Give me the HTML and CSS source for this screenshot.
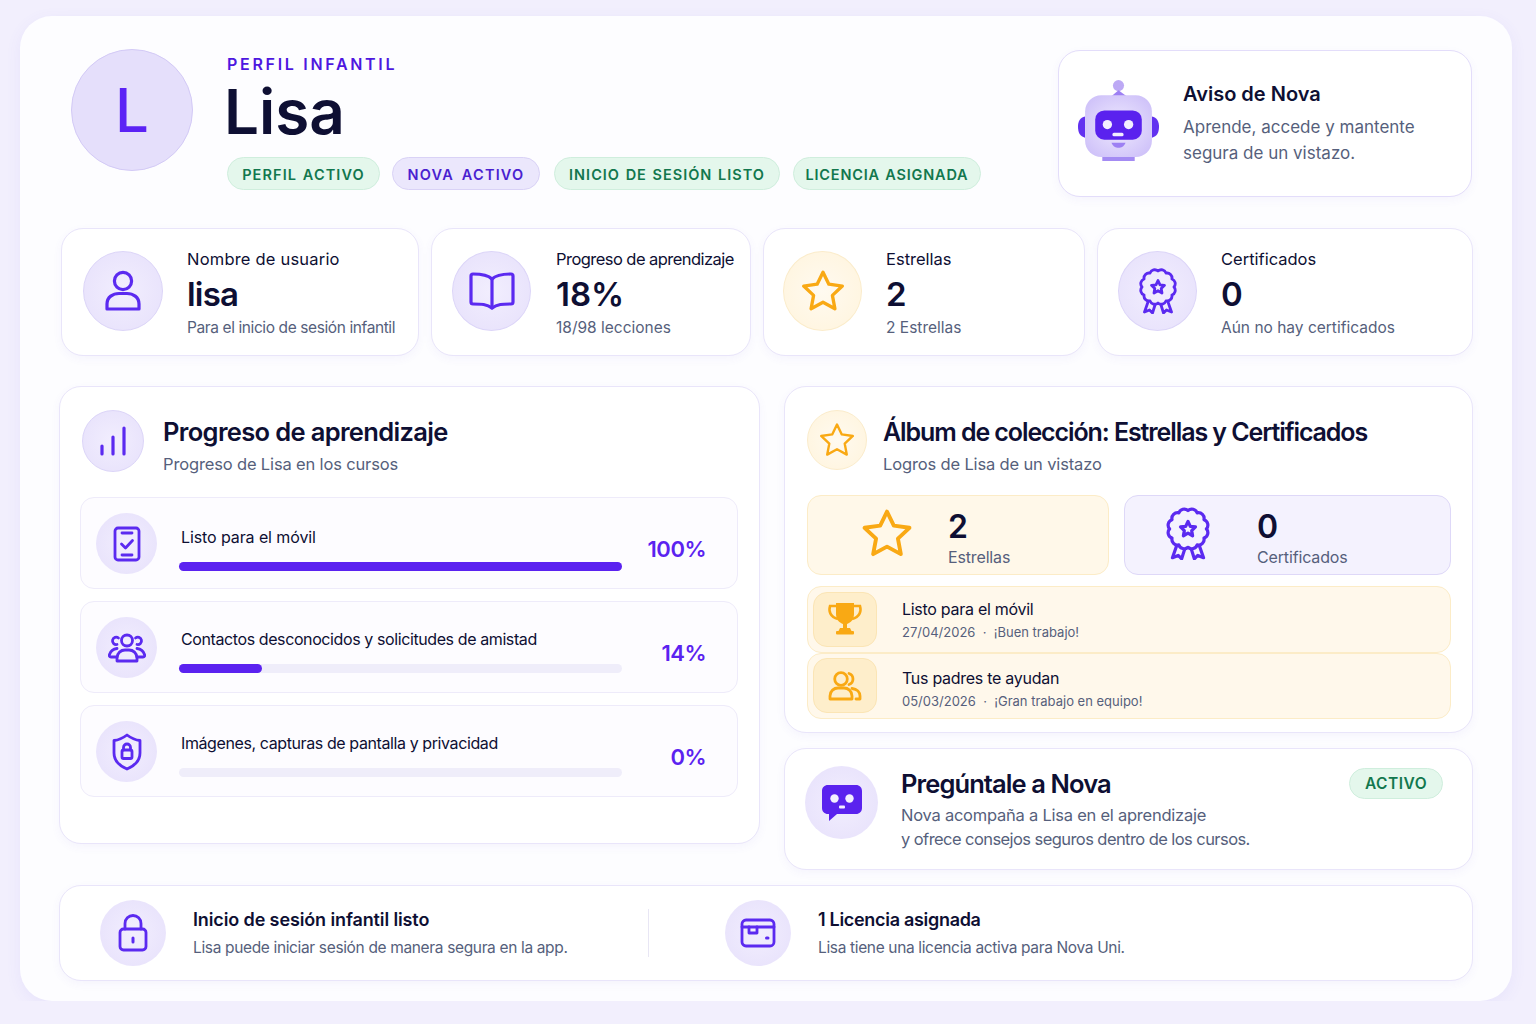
FILE: index.html
```html
<!DOCTYPE html>
<html lang="es">
<head>
    <meta charset="UTF-8">
    <meta name="viewport" content="width=device-width, initial-scale=1.0">
    <title>Perfil infantil - Lisa</title>
    <link rel="stylesheet" href="styles.css">
</head>
<body>
    <div class="shell">
        <header class="top">
            <div class="avatar">L</div>
            <div class="who">
                <div class="eyebrow">PERFIL INFANTIL</div>
                <h1>Lisa</h1>
                <div class="chips">
                    <span class="chip chip-green chip-a">PERFIL ACTIVO</span>
                    <span class="chip chip-violet chip-b">NOVA ACTIVO</span>
                    <span class="chip chip-green chip-c">INICIO DE SESIÓN LISTO</span>
                    <span class="chip chip-green chip-d">LICENCIA ASIGNADA</span>
                </div>
            </div>
            <aside class="notice">
                <svg class="robot" viewBox="0 0 80 80">
                    <defs>
                        <radialGradient id="robot-body" cx="50%" cy="50%" r="60%">
                            <stop offset="0%" stop-color="#efeafe"/>
                            <stop offset="100%" stop-color="#cfc2f9"/>
                        </radialGradient>
                    </defs>
                    <circle cx="40" cy="5.500" r="5.500" fill="#bda9f5"/>
                    <path d="M33 16 L40 10 L48 16 Z" fill="#9d80f3"/>
                    <path d="M7 36 C2 37 0 41 0 46 C0 52 2 56 7 57 Z" fill="#6231f0"/>
                    <path d="M73 36 C78 37 80 41 80 46 C80 52 78 56 73 57 Z" fill="#6231f0"/>
                    <rect x="24" y="74" width="32" height="6" fill="#a48bf3"/>
                    <rect x="7" y="15" width="66" height="61" rx="16" fill="url(#robot-body)"/>
                    <rect x="17" y="30" width="46" height="29" rx="9" fill="#5a22ee"/>
                    <circle cx="29" cy="44" r="4.600" fill="#f3efff"/>
                    <circle cx="50" cy="44" r="4.600" fill="#f3efff"/>
                    <rect x="34" y="52" width="11" height="3.600" rx="1.500" fill="#f3efff"/>
                    <path d="M33 62 H47 C45 66 43 67 40 67 C37 67 35 66 33 62 Z" fill="#9d80f3"/>
                </svg>
                <div>
                    <h3>Aviso de Nova</h3>
                    <p>Aprende, accede y mantente<br>segura de un vistazo.</p>
                </div>
            </aside>
        </header>

        <section class="stats">
            <div class="card stat stat-a">
                <div class="disc disc-80">
                    <svg class="ico" width="42" height="44" viewBox="0 0 42 44"><circle cx="21" cy="12" r="8.600"/><path d="M5 40 V35 C5 28 11 24.500 17 24.500 H25 C31 24.500 37 28 37 35 V40 Z"/></svg>
                </div>
                <div class="stat-text">
                    <div class="stat-label label-wide">Nombre de usuario</div>
                    <div class="stat-value value-tight">lisa</div>
                    <div class="stat-sub sub-tight">Para el inicio de sesión infantil</div>
                </div>
            </div>
            <div class="card stat stat-b">
                <div class="disc disc-80">
                    <svg class="ico" width="46" height="40" viewBox="0 0 46 40"><path d="M23 8 C19 4 13 3 4 3 C2.500 3 2 4 2 5 V31 C2 32.500 3 33 4 33 C12 33 18 33 23 37 C28 33 34 33 42 33 C43 33 44 32.500 44 31 V5 C44 4 43.500 3 42 3 C33 3 27 4 23 8 Z"/><path d="M23 8 V37"/></svg>
                </div>
                <div class="stat-text">
                    <div class="stat-label label-tight">Progreso de aprendizaje</div>
                    <div class="stat-value">18%</div>
                    <div class="stat-sub">18/98 lecciones</div>
                </div>
            </div>
            <div class="card stat stat-c">
                <div class="disc disc-80 disc-amber">
                    <svg class="ico ico-amber" width="46" height="44" viewBox="0 0 44 42"><path d="M22 3 L27.600 14.500 L40.500 16.300 L31 25.200 L33.400 38 L22 31.800 L10.600 38 L13 25.200 L3.500 16.300 L16.400 14.500 Z"/></svg>
                </div>
                <div class="stat-text">
                    <div class="stat-label">Estrellas</div>
                    <div class="stat-value">2</div>
                    <div class="stat-sub">2 Estrellas</div>
                </div>
            </div>
            <div class="card stat stat-d">
                <div class="disc disc-80">
                    <svg class="ico ico-medal" width="38" height="46" viewBox="0 0 38 46"><path d="M19 3 A5 5 0 0 1 27 5.100 A5 5 0 0 1 32.900 11 A5 5 0 0 1 35 19 A5 5 0 0 1 32.900 27 A5 5 0 0 1 27 32.900 A5 5 0 0 1 19 35 A5 5 0 0 1 11 32.900 A5 5 0 0 1 5.100 27 A5 5 0 0 1 3 19 A5 5 0 0 1 5.100 11 A5 5 0 0 1 11 5.100 A5 5 0 0 1 19 3 Z"/><path d="M19 12.500 L21 16.800 L25.500 17.300 L22.200 20.500 L23 25 L19 22.700 L15 25 L15.800 20.500 L12.500 17.300 L17 16.800 Z"/><path d="M9 34 L5.500 44 L10.500 42 L13.500 45 L16 37"/><path d="M29 34 L32.500 44 L27.500 42 L24.500 45 L22 37"/></svg>
                </div>
                <div class="stat-text">
                    <div class="stat-label">Certificados</div>
                    <div class="stat-value">0</div>
                    <div class="stat-sub">Aún no hay certificados</div>
                </div>
            </div>
        </section>

        <main class="columns">
            <section class="card panel panel-left">
                <div class="panel-head">
                    <div class="disc disc-62">
                        <svg class="ico" width="28" height="30" viewBox="0 0 28 30"><path d="M3 20 V28 M14 11 V28 M25 2 V28"/></svg>
                    </div>
                    <div>
                        <h2 class="title-progress">Progreso de aprendizaje</h2>
                        <p class="panel-sub">Progreso de Lisa en los cursos</p>
                    </div>
                </div>
                <div class="courses">
                    <div class="course course-first">
                        <div class="disc disc-61">
                            <svg class="ico ico-row" width="28" height="36" viewBox="0 0 28 36"><rect x="2" y="2" width="24" height="32" rx="3"/><path d="M9 7 H19 M9 29 H19 M8.500 18 L12.500 22 L19.500 14.500"/></svg>
                        </div>
                        <div class="course-main">
                            <div class="course-name name-loose">Listo para el móvil</div>
                            <div class="track"><div class="fill" style="width: 100%"></div></div>
                        </div>
                        <div class="pct">100%</div>
                    </div>
                    <div class="course">
                        <div class="disc disc-61">
                            <svg class="ico ico-row" width="38" height="30" viewBox="0 0 38 30"><circle cx="19" cy="7.500" r="5.500"/><path d="M9 28 V25 C9 20 13 17 17 17 H21 C25 17 29 20 29 25 V28 Z"/><path d="M9 11.500 A3.700 3.700 0 1 1 10.500 5 M29 11.500 A3.700 3.700 0 1 0 27.500 5"/><path d="M9 24 H3 C1.500 24 1 23 1.500 21.500 C2.500 18.500 5 16 9 15.500 M29 24 H35 C36.500 24 37 23 36.500 21.500 C35.500 18.500 33 16 29 15.500"/></svg>
                        </div>
                        <div class="course-main">
                            <div class="course-name">Contactos desconocidos y solicitudes de amistad</div>
                            <div class="track"><div class="fill" style="width: 18.700%"></div></div>
                        </div>
                        <div class="pct">14%</div>
                    </div>
                    <div class="course">
                        <div class="disc disc-61">
                            <svg class="ico ico-row" width="30" height="38" viewBox="0 0 30 38"><path d="M15 2 C19 5 23 7 28 7.500 V20 C28 28 22 33 15 36 C8 33 2 28 2 20 V7.500 C7 7 11 5 15 2 Z"/><rect x="10" y="17" width="10" height="8.500" rx="1.500"/><path d="M11.500 17 V14.500 A3.500 3.500 0 0 1 18.500 14.500 V17"/></svg>
                        </div>
                        <div class="course-main">
                            <div class="course-name">Imágenes, capturas de pantalla y privacidad</div>
                            <div class="track"></div>
                        </div>
                        <div class="pct">0%</div>
                    </div>
                </div>
            </section>

            <div class="right-col">
                <section class="card panel panel-album">
                    <div class="panel-head">
                        <div class="disc disc-60 disc-amber">
                            <svg class="ico ico-amber ico-row" width="38" height="36" viewBox="0 0 44 42"><path d="M22 3 L27.600 14.500 L40.500 16.300 L31 25.200 L33.400 38 L22 31.800 L10.600 38 L13 25.200 L3.500 16.300 L16.400 14.500 Z"/></svg>
                        </div>
                        <div>
                            <h2 class="title-album">Álbum de colección: Estrellas y Certificados</h2>
                            <p class="panel-sub">Logros de Lisa de un vistazo</p>
                        </div>
                    </div>
                    <div class="tiles">
                        <div class="tile tile-amber">
                            <svg class="ico ico-amber" width="54" height="51" viewBox="0 0 44 42"><path d="M22 3 L27.600 14.500 L40.500 16.300 L31 25.200 L33.400 38 L22 31.800 L10.600 38 L13 25.200 L3.500 16.300 L16.400 14.500 Z"/></svg>
                            <div class="tile-text">
                                <div class="tile-value">2</div>
                                <div class="tile-label">Estrellas</div>
                            </div>
                        </div>
                        <div class="tile tile-violet">
                            <svg class="ico ico-medal" width="44" height="53" viewBox="0 0 38 46"><path d="M19 3 A5 5 0 0 1 27 5.100 A5 5 0 0 1 32.900 11 A5 5 0 0 1 35 19 A5 5 0 0 1 32.900 27 A5 5 0 0 1 27 32.900 A5 5 0 0 1 19 35 A5 5 0 0 1 11 32.900 A5 5 0 0 1 5.100 27 A5 5 0 0 1 3 19 A5 5 0 0 1 5.100 11 A5 5 0 0 1 11 5.100 A5 5 0 0 1 19 3 Z"/><path d="M19 12.500 L21 16.800 L25.500 17.300 L22.200 20.500 L23 25 L19 22.700 L15 25 L15.800 20.500 L12.500 17.300 L17 16.800 Z"/><path d="M9 34 L5.500 44 L10.500 42 L13.500 45 L16 37"/><path d="M29 34 L32.500 44 L27.500 42 L24.500 45 L22 37"/></svg>
                            <div class="tile-text">
                                <div class="tile-value">0</div>
                                <div class="tile-label">Certificados</div>
                            </div>
                        </div>
                    </div>
                    <div class="awards">
                        <div class="award">
                            <div class="award-icon">
                                <svg width="36" height="34" viewBox="0 0 36 34"><path d="M9 1 H27 V12 C27 18 23 21 20 22 V26 H23 L25 30 H11 L13 26 H16 V22 C13 21 9 18 9 12 Z" fill="#f9a914"/><rect x="9" y="29" width="18" height="3.500" rx="1" fill="#f9a914"/><path d="M9 4 H3 C1.500 9 3 15 11 17 M27 4 H33 C34.500 9 33 15 25 17" fill="none" stroke="#f9a914" stroke-width="2.600"/></svg>
                            </div>
                            <div>
                                <div class="award-name">Listo para el móvil</div>
                                <div class="award-meta">27/04/2026 &nbsp;·&nbsp; ¡Buen trabajo!</div>
                            </div>
                        </div>
                        <div class="award">
                            <div class="award-icon">
                                <svg class="ico ico-amber ico-row" width="34" height="30" viewBox="0 0 34 30"><circle cx="13" cy="8" r="6.300"/><path d="M2 28 V25 C2 20 6 17 10 17 H16 C20 17 24 20 24 25 V28 Z"/><path d="M21 2.500 A5.800 5.800 0 0 1 21 13.500"/><path d="M24 17.500 C29 18 32 21 32 25 V28 H28"/></svg>
                            </div>
                            <div class="award-low">
                                <div class="award-name">Tus padres te ayudan</div>
                                <div class="award-meta">05/03/2026 &nbsp;·&nbsp; ¡Gran trabajo en equipo!</div>
                            </div>
                        </div>
                    </div>
                </section>

                <section class="card ask">
                    <div class="disc disc-73">
                        <svg width="42" height="38" viewBox="0 0 42 38"><path d="M7 1 H35 C38.500 1 41 3.500 41 7 V24 C41 27.500 38.500 30 35 30 H16 L8 37 V30 H7 C3.500 30 1 27.500 1 24 V7 C1 3.500 3.500 1 7 1 Z" fill="#5a22ee"/><circle cx="13.500" cy="14.500" r="4.200" fill="#f3efff"/><circle cx="28.500" cy="14.500" r="4.200" fill="#f3efff"/><rect x="18" y="21.500" width="6" height="3" rx="1" fill="#f3efff"/></svg>
                    </div>
                    <div class="ask-text">
                        <h2 class="title-ask">Pregúntale a Nova</h2>
                        <p><span class="ask-line-1">Nova acompaña a Lisa en el aprendizaje</span><br><span class="ask-line-2">y ofrece consejos seguros dentro de los cursos.</span></p>
                    </div>
                    <span class="badge">ACTIVO</span>
                </section>
            </div>
        </main>

        <footer class="card bottom">
            <div class="bottom-item bottom-first">
                <div class="disc disc-66">
                    <svg class="ico ico-row" width="30" height="38" viewBox="0 0 30 38"><rect x="2" y="15" width="26" height="21" rx="3.500"/><path d="M7 15 V9.500 A8 8 0 0 1 23 9.500 V15"/><path d="M15 24 V28" stroke-width="3"/></svg>
                </div>
                <div class="bottom-text">
                    <h4 class="login-title">Inicio de sesión infantil listo</h4>
                    <p>Lisa puede iniciar sesión de manera segura en la app.</p>
                </div>
            </div>
            <div class="divider"></div>
            <div class="bottom-item bottom-second">
                <div class="disc disc-66">
                    <svg class="ico ico-row" width="36" height="30" viewBox="0 0 36 30"><rect x="2" y="2" width="32" height="26" rx="4"/><path d="M2 9 H34"/><path d="M9 9 V15 H17 V9"/><path d="M26.500 20 H28" stroke-width="3"/></svg>
                </div>
                <div class="bottom-text">
                    <h4 class="license-title">1 Licencia asignada</h4>
                    <p>Lisa tiene una licencia activa para Nova Uni.</p>
                </div>
            </div>
        </footer>
    </div>
</body>
</html>
```

FILE: styles.css
```css
* {
    box-sizing: border-box;
}
html, body {
    margin: 0;
    padding: 0;
}
body {
    background: #f2effd;
    font-family: Inter, "Noto Sans", sans-serif;
    color: #0e0f33;
}
h1, h2, h3, h4, p {
    margin: 0;
}
.shell {
    width: 1492px;
    height: 985px;
    margin: 16px 0 0 20px;
    padding: 34px 39px 0;
    background: #fdfdff;
    border-radius: 32px;
    box-shadow: 0 4px 16px rgba(104, 80, 220, 0.07);
}
.card {
    background: #fff;
    border: 1.5px solid #e9e5fa;
    border-radius: 22px;
    box-shadow: 0 3px 10px rgba(104, 80, 220, 0.05);
}
.disc {
    flex: none;
    display: flex;
    align-items: center;
    justify-content: center;
    border-radius: 50%;
    background: radial-gradient(circle, #f2eefe 0%, #e6e0fb 100%);
    border: 1px solid #dcd5f8;
}
.disc-amber {
    background: radial-gradient(circle, #fffaf0 0%, #fff4dc 100%);
    border-color: #fbeccb;
}
.disc-80 { width: 80px; height: 80px; margin-top: -3px; }
.disc-73 { width: 73px; height: 73px; border: 0; }
.disc-66 { width: 66px; height: 66px; border: 0; }
.disc-62 { width: 62px; height: 62px; }
.disc-61 { width: 61px; height: 61px; border: 0; }
.disc-60 { width: 60px; height: 60px; }
.ico {
    fill: none;
    stroke: #5b2af0;
    stroke-width: 3.2;
    stroke-linecap: round;
    stroke-linejoin: round;
}
.ico-row { stroke-width: 2.800; }
.ico-medal { stroke-width: 2.800; }
.ico-amber { stroke: #f9a914; }

/* top */
.top {
    display: flex;
    height: 147px;
}
.avatar {
    flex: none;
    width: 122px;
    height: 122px;
    margin: -1px 34px 0 12px;
    border-radius: 50%;
    background: #e5dffb;
    border: 1.5px solid #d3caf6;
    color: #5b22f5;
    font-size: 60px;
    font-weight: 500;
    display: flex;
    align-items: center;
    justify-content: center;
}
.who {
    flex: 1;
}
.eyebrow {
    margin-top: 4px;
    font-size: 16px;
    line-height: 20px;
    font-weight: 600;
    letter-spacing: 2.700px;
    color: #4d17e0;
}
h1 {
    margin: 2px 0 0 -3px;
    font-size: 62px;
    line-height: 72px;
    font-weight: 600;
}
.chips {
    display: flex;
    gap: 12px;
    margin-top: 9px;
}
.chip {
    height: 33px;
    padding-top: 1px;
    border-radius: 17px;
    font-size: 14.500px;
    font-weight: 600;
    letter-spacing: 1.100px;
    word-spacing: 1px;
    display: flex;
    align-items: center;
    justify-content: center;
    white-space: nowrap;
}
.chip-green {
    background: #e4f7ec;
    border: 1px solid #cfeedd;
    color: #12774e;
}
.chip-violet {
    background: #ebe7fc;
    border: 1px solid #d9d2f6;
    color: #4a1fd0;
}
.chip-a { width: 153px; }
.chip-b { width: 148px; word-spacing: 3px; letter-spacing: 1.200px; }
.chip-c { width: 226px; margin-left: 2px; letter-spacing: 1px; }
.chip-d { width: 188px; margin-left: 1px; letter-spacing: 0.800px; }
.notice {
    flex: none;
    width: 414px;
    height: 147px;
    display: flex;
    align-items: center;
    gap: 24px;
    padding-left: 19px;
    margin-right: 1px;
    background: #fff;
    border: 1.5px solid #e3ddfa;
    border-radius: 22px;
    box-shadow: 0 3px 10px rgba(104, 80, 220, 0.05);
}
.robot {
    flex: none;
    width: 81px;
    height: 81px;
    margin-bottom: 7px;
}
.notice h3 {
    font-size: 20px;
    line-height: 26px;
    font-weight: 600;
}
.notice p {
    margin-top: 7px;
    font-size: 17px;
    line-height: 26px;
    color: #565f7c;
}

/* stats */
.stats {
    display: grid;
    grid-template-columns: 358px 320px 322px 376px;
    gap: 12px;
    margin: 31px 0 0 2px;
}
.stat {
    height: 128px;
    display: flex;
    align-items: center;
    gap: 24px;
    padding-left: 21px;
}
.stat-b { padding-left: 20px; gap: 25px; }
.stat-c { padding-left: 19px; }
.stat-d { padding-left: 20px; }
.stat-b .disc-80,
.stat-c .disc-80,
.stat-d .disc-80 {
    width: 79px;
}
.stat-label {
    margin-top: 2px;
    font-size: 16.500px;
    line-height: 22px;
}
.label-wide { letter-spacing: 0.200px; }
.label-tight { letter-spacing: -0.550px; }
.stat-value {
    margin-top: 4px;
    font-size: 33px;
    line-height: 40px;
    font-weight: 600;
}
.value-tight { letter-spacing: -0.800px; }
.stat-sub {
    margin-top: 3px;
    font-size: 15.500px;
    line-height: 22px;
    color: #565f7c;
    white-space: nowrap;
}
.sub-tight { letter-spacing: -0.400px; }

/* columns */
.columns {
    display: grid;
    grid-template-columns: 701px 689px;
    gap: 24px;
    margin-top: 30px;
}
.panel-left {
    height: 458px;
    padding: 23px 21px 0 21px;
}
.panel-left .panel-head {
    gap: 19px;
}
.panel-left .disc-62 {
    margin-left: 1px;
}
.panel-head {
    display: flex;
    align-items: flex-start;
    gap: 18px;
}
h2 {
    font-size: 25.500px;
    line-height: 34px;
    font-weight: 600;
}
.title-progress { letter-spacing: -0.650px; margin-top: 5px; }
.title-album { font-size: 25px; letter-spacing: -1.090px; margin-top: 5px; }
.title-ask { letter-spacing: -0.900px; }
.panel-sub {
    margin-top: 3px;
    font-size: 16.500px;
    line-height: 24px;
    letter-spacing: -0.150px;
    color: #565f7c;
}
.courses {
    display: flex;
    flex-direction: column;
    gap: 12px;
    margin: 21px 0 0 -1px;
}
.course {
    height: 92px;
    display: flex;
    align-items: center;
    padding-left: 15px;
    background: #fdfcff;
    border: 1.5px solid #eeebfa;
    border-radius: 14px;
}
.course .disc-61 {
    margin-top: 1px;
}
.course-main {
    width: 443px;
    margin-left: 22px;
    padding-top: 10px;
}
.course-first .course-main {
    padding-top: 13px;
}
.course-name {
    margin: -3px 0 14px 2px;
    font-size: 16px;
    line-height: 22px;
    letter-spacing: -0.400px;
}
.name-loose { letter-spacing: -0.100px; }
.track {
    height: 9px;
    border-radius: 5px;
    background: #efedfa;
}
.fill {
    height: 100%;
    border-radius: 5px;
    background: #5b22f0;
}
.pct {
    width: 84px;
    margin-top: 12px;
    text-align: right;
    font-size: 22px;
    letter-spacing: -0.500px;
    font-weight: 600;
    color: #5b22f0;
}

/* right column */
.right-col {
    display: flex;
    flex-direction: column;
    gap: 15px;
}
.panel-album {
    height: 347px;
    padding: 23px 21px 0 22px;
}
.panel-album .panel-head {
    gap: 16px;
}
.tiles {
    display: grid;
    grid-template-columns: 302px 327px;
    gap: 15px;
    margin-top: 19px;
}
.tile {
    height: 80px;
    display: flex;
    align-items: center;
    border-radius: 14px;
}
.tile svg {
    margin-bottom: 4px;
}
.tile-text {
    margin-top: 5px;
}
.tile-amber {
    gap: 34px;
    padding-left: 52px;
    background: #fff8e9;
    border: 1.5px solid #fcecc7;
}
.tile-violet {
    gap: 47px;
    padding-left: 41px;
    background: #f4f2fe;
    border: 1.5px solid #ded8f8;
}
.tile-value {
    font-size: 32px;
    line-height: 36px;
    font-weight: 600;
}
.tile-label {
    margin-top: 2px;
    font-size: 16px;
    line-height: 20px;
    letter-spacing: -0.150px;
    color: #565f7c;
}
.awards {
    margin-top: 11px;
}
.award {
    height: 66.500px;
    display: flex;
    align-items: center;
    gap: 25px;
    padding-left: 5px;
    background: #fff8eb;
    border: 1.5px solid #fcecc7;
    border-radius: 14px;
}
.award-icon {
    flex: none;
    width: 64px;
    height: 55px;
    display: flex;
    align-items: center;
    justify-content: center;
    border-radius: 14px;
    background: #feeecb;
    border: 1px solid #fbe5b5;
}
.award-low {
    padding-top: 5px;
}
.award-name {
    font-size: 16px;
    line-height: 22px;
    letter-spacing: -0.280px;
}
.award-meta {
    margin-top: 3px;
    font-size: 13px;
    line-height: 18px;
    color: #565f7c;
}
.ask {
    height: 122px;
    display: flex;
    align-items: center;
    padding: 0 29px 0 20px;
}
.ask .disc-73 {
    margin-top: -13px;
}
.ask-text {
    flex: 1;
    margin: 0 0 0 23px;
}
.ask-text p {
    margin-top: 2px;
    font-size: 16.500px;
    line-height: 24px;
    color: #565f7c;
}
.ask-line-1 { letter-spacing: -0.240px; }
.ask-line-2 { letter-spacing: -0.570px; }
.badge {
    align-self: flex-start;
    width: 94px;
    height: 31px;
    margin-top: 19px;
    display: flex;
    align-items: center;
    justify-content: center;
    border-radius: 16px;
    background: #e4f7ec;
    border: 1px solid #cfeedd;
    color: #12774e;
    font-size: 15.500px;
    font-weight: 600;
    letter-spacing: 0.500px;
}

/* bottom */
.bottom {
    height: 96px;
    margin-top: 15px;
    display: flex;
    align-items: center;
}
.bottom-item {
    display: flex;
    align-items: center;
    gap: 27px;
}
.bottom-text {
    padding-top: 2px;
}
.bottom-first {
    width: 588px;
    height: 66px;
    padding-left: 40px;
}
.divider {
    width: 1px;
    height: 48px;
    background: #e8e6f4;
}
.bottom-second {
    padding-left: 76px;
}
.bottom h4 {
    font-size: 18px;
    line-height: 24px;
    font-weight: 600;
}
.login-title { letter-spacing: -0.120px; }
.license-title { letter-spacing: -0.300px; }
.bottom p {
    margin-top: 4px;
    font-size: 15.500px;
    line-height: 24px;
    letter-spacing: -0.350px;
    color: #565f7c;
}
```
